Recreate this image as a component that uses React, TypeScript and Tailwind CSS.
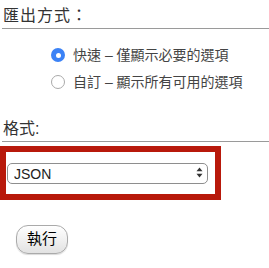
import React, { useState } from 'react';

const font = { fontFamily: '"Liberation Sans", "Noto Sans CJK TC", sans-serif' };

const App: React.FC = () => {
    const [mode, setMode] = useState<'quick' | 'custom'>('quick');
    const [format, setFormat] = useState('json');

    return (
        <div className="w-[269px] h-[268px] bg-white text-[#333] overflow-hidden" style={font}>
            <div className="pt-[6px]">
                <h2 className="pl-[3px] text-[16px] leading-[20px] font-normal text-[#333] tracking-[1px]">匯出方式：</h2>
                <div className="mt-[2px] ml-[2px] h-px bg-[#9a9a9a]" />
            </div>

            <div className="mt-[16px] pl-[51px] flex flex-col gap-[7px] text-[14px] text-[#444]">
                <label className="flex items-center h-[20px] cursor-pointer">
                    <input type="radio" name="mode" checked={mode === 'quick'} onChange={() => setMode('quick')} className="hidden" />
                    <span className={`w-[14px] h-[14px] rounded-full flex items-center justify-center ${mode === 'quick' ? 'bg-[#3b82f6]' : 'border border-[#aaa] bg-white'}`}>
                        {mode === 'quick' && <span className="w-[5px] h-[5px] rounded-full bg-white" />}
                    </span>
                    <span className="ml-[8px]">快速 – 僅顯示必要的選項</span>
                </label>
                <label className="flex items-center h-[20px] cursor-pointer">
                    <input type="radio" name="mode" checked={mode === 'custom'} onChange={() => setMode('custom')} className="hidden" />
                    <span className={`w-[14px] h-[14px] rounded-full flex items-center justify-center ${mode === 'custom' ? 'bg-[#3b82f6]' : 'border border-[#aaa] bg-white'}`}>
                        {mode === 'custom' && <span className="w-[5px] h-[5px] rounded-full bg-white" />}
                    </span>
                    <span className="ml-[8px]">自訂 – 顯示所有可用的選項</span>
                </label>
            </div>

            <div className="mt-[27px]">
                <h2 className="pl-[3px] text-[16px] leading-[20px] font-normal text-[#333]">格式:</h2>
                <div className="mt-[2px] ml-[2px] h-px bg-[#9a9a9a]" />
            </div>

            <div className="mt-[4px] w-[221px] border-[6px] border-[#b8190b] pt-[10px] pb-[11px] pl-[1px]">
                <div className="relative w-[201px] h-[21px]">
                    <select
                        value={format}
                        onChange={(e) => setFormat(e.target.value)}
                        className="appearance-none w-full h-full rounded-[5px] border border-[#8e8e8e] bg-white pl-[6px] text-[14px] font-normal text-[#222] outline-none"
                    >
                        <option value="json">JSON</option>
                        <option value="csv">CSV</option>
                        <option value="sql">SQL</option>
                    </select>
                    <svg className="absolute right-[5px] top-[5px] pointer-events-none" width="7" height="11" viewBox="0 0 7 11">
                        <path d="M3.5 0.5 L6.5 4.2 H0.5 Z" fill="#333" />
                        <path d="M3.5 10.5 L6.5 6.8 H0.5 Z" fill="#333" />
                    </svg>
                </div>
            </div>

            <div className="mt-[25px] pl-[16px]">
                <button className="w-[52px] h-[29px] rounded-[12px] border border-[#aaa] bg-gradient-to-b from-white to-[#e2e2e2] text-[15px] text-black shadow-[0_1px_1px_rgba(0,0,0,0.15)]">
                    執行
                </button>
            </div>
        </div>
    );
};

export default App;
